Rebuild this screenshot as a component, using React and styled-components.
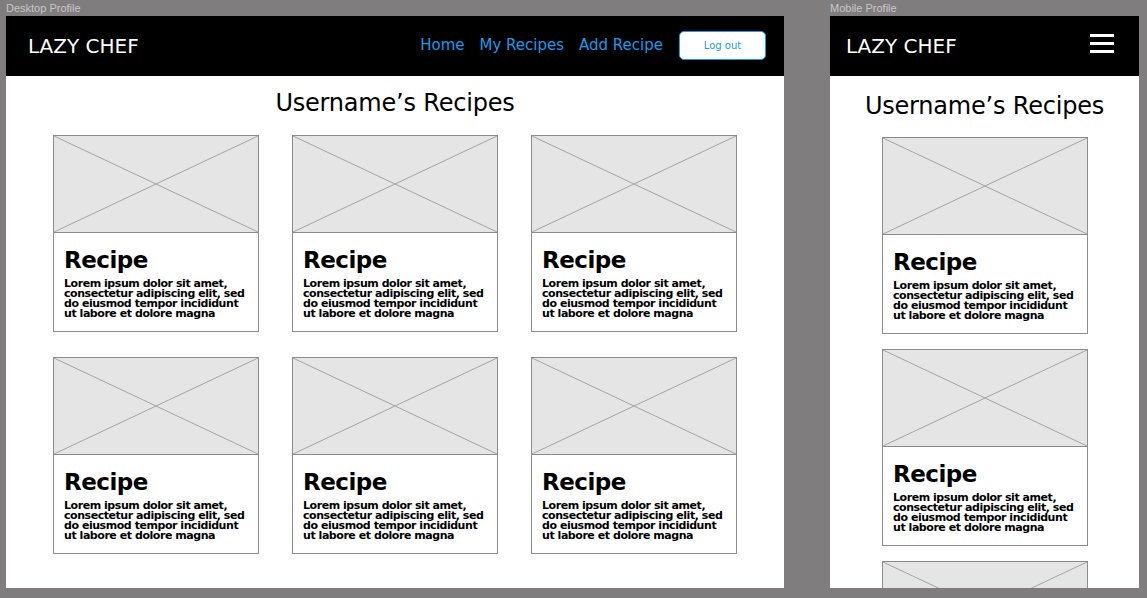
import React from "react";
import styled, { createGlobalStyle } from "styled-components";

const GlobalStyle = createGlobalStyle`
  html, body {
    margin: 0;
    padding: 0;
    background: #7f7d7e;
    font-family: "DejaVu Sans", "Liberation Sans", sans-serif;
  }
`;

const recipes = [1, 2, 3, 4, 5, 6];
const lorem =
  "Lorem ipsum dolor sit amet, consectetur adipiscing elit, sed do eiusmod tempor incididunt ut labore et dolore magna";

const Page = styled.div`
  display: flex;
  gap: 46px;
  padding: 0 8px 0 6px;
  height: 598px;
  overflow: hidden;
`;

const Board = styled.div`
  display: flex;
  flex-direction: column;
`;

const BoardLabel = styled.div`
  height: 16px;
  line-height: 16px;
  font-family: "Liberation Sans", sans-serif;
  font-size: 11px;
  color: #c9c7c8;
`;

const Frame = styled.div`
  width: ${(p) => p.width}px;
  height: 572px;
  background: #fff;
  overflow: hidden;
  display: flex;
  flex-direction: column;
`;

const Header = styled.header`
  height: 60px;
  flex-shrink: 0;
  background: #000;
  display: flex;
  align-items: center;
  justify-content: space-between;
  padding: 0 18px 0 ${(p) => p.$pl}px;
`;

const Logo = styled.div`
  color: #fff;
  font-size: 20px;
`;

const Nav = styled.nav`
  display: flex;
  align-items: center;
  gap: 15px;
`;

const NavLink = styled.a`
  color: #1a9bea;
  font-size: 15px;
  text-decoration: none;
  margin-top: -2px;
`;

const LogoutButton = styled.button`
  width: 87px;
  height: 29px;
  margin-left: 1px;
  margin-top: -2px;
  background: #fff;
  border: 1.5px solid #1a9bea;
  border-radius: 5px;
  color: #1a9bea;
  font-family: inherit;
  font-size: 10px;
`;

const Hamburger = styled.div`
  display: flex;
  flex-direction: column;
  gap: 5px;
  margin-top: -6px;
  margin-right: 7px;

  span {
    display: block;
    width: 24px;
    height: 3px;
    background: #fff;
  }
`;

const Title = styled.h1`
  margin: ${(p) => p.$mt}px 0 ${(p) => p.$mb}px;
  text-align: center;
  font-size: 24px;
  font-weight: normal;
  line-height: 28px;
  letter-spacing: -0.2px;
  color: #000;
`;

const Grid = styled.div`
  display: grid;
  grid-template-columns: repeat(3, 206px);
  column-gap: 33px;
  row-gap: 25px;
  justify-content: center;
`;

const Stack = styled.div`
  display: flex;
  flex-direction: column;
  gap: 15px;
  padding-left: 52px;
`;

const Card = styled.div`
  width: 206px;
  height: 197px;
  box-sizing: border-box;
  border: 1px solid #8c8c8c;
  display: flex;
  flex-direction: column;
  flex-shrink: 0;
`;

const Placeholder = styled.div`
  height: 96px;
  flex-shrink: 0;
  background: #e5e5e5;
  border-bottom: 1px solid #8c8c8c;

  svg {
    display: block;
    width: 100%;
    height: 100%;
  }
`;

const CardBody = styled.div`
  padding: 13px 5px 0 10px;
`;

const CardTitle = styled.h2`
  margin: 0;
  font-size: 23px;
  font-weight: bold;
  line-height: 28px;
  letter-spacing: -0.5px;
`;

const CardText = styled.p`
  margin: 5px 0 0;
  font-size: 11px;
  font-weight: bold;
  line-height: 10px;
  letter-spacing: -0.45px;
  color: #000;
`;

const ImageCross = () => (
  <svg viewBox="0 0 204 96" preserveAspectRatio="none">
    <line x1="0" y1="0" x2="204" y2="96" stroke="#a3a3a3" strokeWidth="1" />
    <line x1="204" y1="0" x2="0" y2="96" stroke="#a3a3a3" strokeWidth="1" />
  </svg>
);

const RecipeCard = () => (
  <Card>
    <Placeholder>
      <ImageCross />
    </Placeholder>
    <CardBody>
      <CardTitle>Recipe</CardTitle>
      <CardText>{lorem}</CardText>
    </CardBody>
  </Card>
);

const App = () => {
  return (
    <>
      <GlobalStyle />
      <Page>
        <Board>
          <BoardLabel>Desktop Profile</BoardLabel>
          <Frame width={778}>
            <Header $pl={22}>
              <Logo>LAZY CHEF</Logo>
              <Nav>
                <NavLink>Home</NavLink>
                <NavLink>My Recipes</NavLink>
                <NavLink>Add Recipe</NavLink>
                <LogoutButton>Log out</LogoutButton>
              </Nav>
            </Header>
            <Title $mt={13} $mb={18}>
              Username’s Recipes
            </Title>
            <Grid>
              {recipes.map((r) => (
                <RecipeCard key={r} />
              ))}
            </Grid>
          </Frame>
        </Board>
        <Board>
          <BoardLabel>Mobile Profile</BoardLabel>
          <Frame width={309}>
            <Header $pl={16}>
              <Logo>LAZY CHEF</Logo>
              <Hamburger>
                <span />
                <span />
                <span />
              </Hamburger>
            </Header>
            <Title $mt={16} $mb={17}>
              Username’s Recipes
            </Title>
            <Stack>
              {[1, 2, 3].map((r) => (
                <RecipeCard key={r} />
              ))}
            </Stack>
          </Frame>
        </Board>
      </Page>
    </>
  );
};

export default App;
